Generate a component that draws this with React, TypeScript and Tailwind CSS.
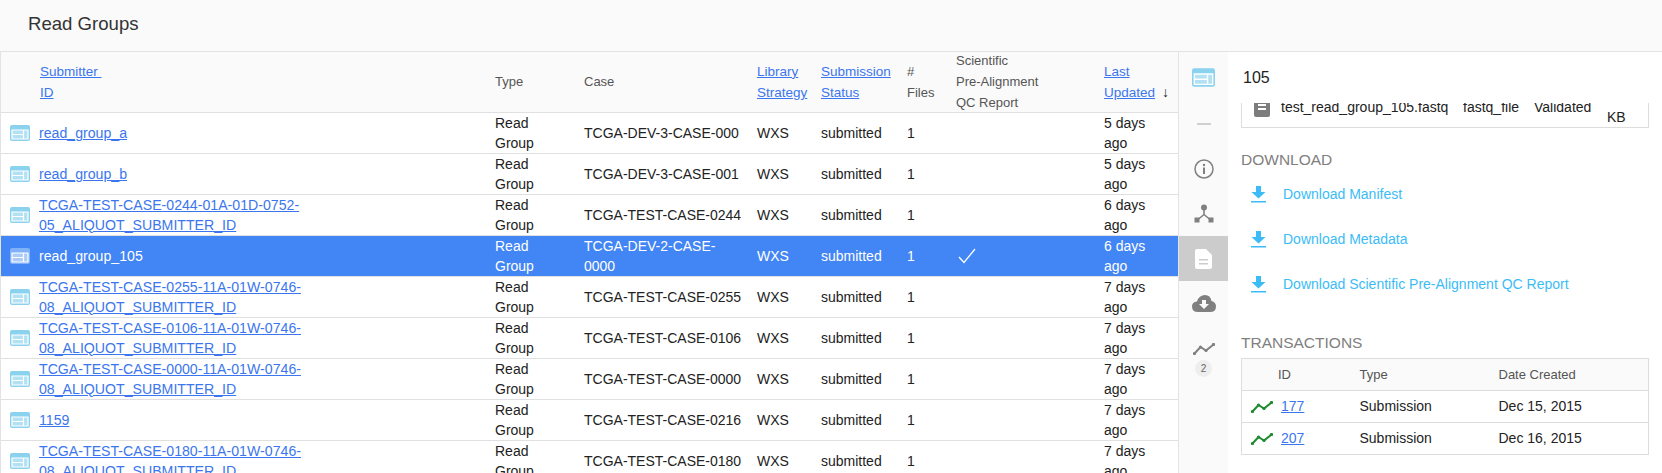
import { ReactNode } from "react";

const rows = [
  { id: "read_group_a", kase: "TCGA-DEV-3-CASE-000", age: "5 days ago" },
  { id: "read_group_b", kase: "TCGA-DEV-3-CASE-001", age: "5 days ago" },
  { id: "TCGA-TEST-CASE-0244-01A-01D-0752-05_ALIQUOT_SUBMITTER_ID", kase: "TCGA-TEST-CASE-0244", age: "6 days ago" },
  { id: "read_group_105", kase: "TCGA-DEV-2-CASE-0000", age: "6 days ago", selected: true },
  { id: "TCGA-TEST-CASE-0255-11A-01W-0746-08_ALIQUOT_SUBMITTER_ID", kase: "TCGA-TEST-CASE-0255", age: "7 days ago" },
  { id: "TCGA-TEST-CASE-0106-11A-01W-0746-08_ALIQUOT_SUBMITTER_ID", kase: "TCGA-TEST-CASE-0106", age: "7 days ago" },
  { id: "TCGA-TEST-CASE-0000-11A-01W-0746-08_ALIQUOT_SUBMITTER_ID", kase: "TCGA-TEST-CASE-0000", age: "7 days ago" },
  { id: "1159", kase: "TCGA-TEST-CASE-0216", age: "7 days ago" },
  { id: "TCGA-TEST-CASE-0180-11A-01W-0746-08_ALIQUOT_SUBMITTER_ID", kase: "TCGA-TEST-CASE-0180", age: "7 days ago" },
];

function ReadGroupIcon({ className, big }: { className?: string; big?: boolean }) {
  return (
    <svg viewBox="0 0 20 16" className={big ? "w-[23px] h-[19px] " + className : "w-[20px] h-[16px] " + className}>
      <rect x="0" y="0" width="20" height="16" rx="2" fill="currentColor" />
      <rect x="2" y="5" width="16" height="9" fill="#fff" fillOpacity="0.35" />
      <path d="M2 5H18V14H2Z M2 9.5H13.5 M13.5 5V14" fill="none" stroke="#fff" strokeWidth="1.2" />
    </svg>
  );
}

function DownloadIcon() {
  return (
    <svg viewBox="0 0 15 17" className="w-[15px] h-[17px] text-[#3bbcf7] shrink-0">
      <path d="M5 0H10V6H14.5L7.5 12.5L0.5 6H5Z M0 15H15V16.5H0Z" fill="currentColor" />
    </svg>
  );
}

function TrendIcon({ className }: { className?: string }) {
  return (
    <svg viewBox="0 0 22 12" className={"w-[22px] h-[12px] " + className}>
      <path d="M1.5 10.5L7.5 4L13 7.5L20.5 1.5" fill="none" stroke="currentColor" strokeWidth="2" />
      <circle cx="1.5" cy="10.5" r="1.6" fill="currentColor" />
      <circle cx="7.5" cy="4" r="1.6" fill="currentColor" />
      <circle cx="13" cy="7.5" r="1.6" fill="currentColor" />
      <circle cx="20.5" cy="1.5" r="1.6" fill="currentColor" />
    </svg>
  );
}

function HeadCell({ children, className }: { children: ReactNode; className?: string }) {
  return <th className={"pl-[5px] text-left align-middle font-normal text-[13px] leading-[21px] text-[#555] " + (className ?? "")}>{children}</th>;
}

function SortLink({ children }: { children: ReactNode }) {
  return <a className="text-[13.5px] text-[#3b76ee] underline">{children}</a>;
}

function RailItem({ children, active }: { children: ReactNode; active?: boolean }) {
  return (
    <div className={"h-[45px] flex items-center justify-center " + (active ? "bg-[#cccccc]" : "")}>
      {children}
    </div>
  );
}

export default function App() {
  return (
    <div className="h-[473px] w-[1662px] overflow-hidden flex flex-col bg-white text-[14px] text-[#222]" style={{ fontFamily: '"Liberation Sans", Arial, sans-serif' }}>
      <header className="h-[52px] shrink-0 flex items-center pl-[28px] pb-[3px] bg-[#fafafa] border-b border-[#e3e3e3]">
        <h1 className="text-[18.6px] text-[#333]">Read Groups</h1>
      </header>

      <div className="flex flex-1 min-h-0">
        <div className="w-[1178px] shrink-0 overflow-hidden border-l border-[#e3e3e3]">
          <table className="table-fixed w-[1177px] border-collapse">
            <colgroup>
              <col className="w-[489px]" />
              <col className="w-[89px]" />
              <col className="w-[173px]" />
              <col className="w-[64px]" />
              <col className="w-[86px]" />
              <col className="w-[49px]" />
              <col className="w-[148px]" />
              <col className="w-[79px]" />
            </colgroup>
            <thead>
              <tr className="h-[60px] bg-[#fafafa] border-b border-[#e0e0e0]">
                <HeadCell className="pl-[39px]">
                  <SortLink>Submitter&nbsp;<br />ID</SortLink>
                </HeadCell>
                <HeadCell>Type</HeadCell>
                <HeadCell>Case</HeadCell>
                <HeadCell><SortLink>Library<br />Strategy</SortLink></HeadCell>
                <HeadCell><SortLink>Submission<br />Status</SortLink></HeadCell>
                <HeadCell>#<br />Files</HeadCell>
                <HeadCell>
                  <div className="h-[59px] flex flex-col justify-center">
                    <span>Scientific</span>
                    <span>Pre-Alignment</span>
                    <span>QC Report</span>
                  </div>
                </HeadCell>
                <HeadCell>
                  <div className="flex items-end">
                    <SortLink>Last<br />Updated</SortLink>
                    <span className="ml-[7px] text-[14px] text-[#222]">↓</span>
                  </div>
                </HeadCell>
              </tr>
            </thead>
            <tbody className="leading-[20px]">
              {rows.map((row) => (
                <tr key={row.id} className={"h-[41px] border-b border-[#e0e0e0] " + (row.selected ? "bg-[#4285f4] text-white" : "")}>
                  <td className="pl-[9px]">
                    <div className="flex items-center">
                      <ReadGroupIcon className={row.selected ? "text-[#7fb0f8] shrink-0" : "text-[#8ad2ee] shrink-0"} />
                      <a className={"ml-[9px] w-[270px] text-[14.15px] " + (row.selected ? "" : "text-[#3b76ee] underline")}>{row.id}</a>
                    </div>
                  </td>
                  <td className="pl-[5px]"><div className="w-[50px]">Read Group</div></td>
                  <td className="pl-[5px]"><div className="w-[158px]">{row.kase}</div></td>
                  <td className="pl-[5px]">WXS</td>
                  <td className="pl-[5px]">submitted</td>
                  <td className="pl-[5px]">1</td>
                  <td className="pl-[5px]">
                    {row.selected && (
                      <svg viewBox="0 0 18 16" className="w-[18px] h-[16px] ml-[2px]">
                        <path d="M1 9L6 14.5L17 1" fill="none" stroke="#fff" strokeWidth="1.3" />
                      </svg>
                    )}
                  </td>
                  <td className="pl-[5px]"><div className="w-[55px]">{row.age}</div></td>
                </tr>
              ))}
            </tbody>
          </table>
        </div>

        <nav className="w-[50px] shrink-0 pt-[4px] bg-[#fafafa] border-l border-[#e3e3e3] text-[#808080]">
          <RailItem><ReadGroupIcon big className="text-[#8ad2ee] -mt-[3px]" /></RailItem>
          <RailItem><div className="w-[14px] h-[2px] bg-[#cfcfcf]" /></RailItem>
          <RailItem>
            <svg viewBox="0 0 20 20" className="w-[20px] h-[20px]">
              <circle cx="10" cy="10" r="9" fill="none" stroke="currentColor" strokeWidth="1.5" />
              <circle cx="10" cy="6" r="1.2" fill="currentColor" />
              <rect x="9" y="8.5" width="2" height="6.5" fill="currentColor" />
            </svg>
          </RailItem>
          <RailItem>
            <svg viewBox="0 0 20 20" className="w-[20px] h-[20px]">
              <circle cx="10" cy="3.5" r="3" fill="currentColor" />
              <path d="M10 5V10.5L4 15.5M10 10.5L16 15.5" fill="none" stroke="currentColor" strokeWidth="1.6" />
              <rect x="0.5" y="13.5" width="5" height="5" fill="currentColor" />
              <rect x="14.5" y="13.5" width="5" height="5" fill="currentColor" />
            </svg>
          </RailItem>
          <RailItem active>
            <svg viewBox="0 0 17 20" className="w-[17px] h-[20px]">
              <path fillRule="evenodd" d="M2 0H11L17 6V18Q17 20 15 20H2Q0 20 0 18V2Q0 0 2 0ZM4 10V11.5H13V10ZM4 14V15.5H13V14Z" fill="#fff" />
            </svg>
          </RailItem>
          <RailItem>
            <svg viewBox="0 0 24 17" className="w-[24px] h-[17px]">
              <path fillRule="evenodd" d="M6 17Q0 17 0 11.5Q0 7 5 6.5Q7 0 13 0Q18.5 0 19.5 6Q24 7 24 11.5Q24 17 18 17ZM10 5V9H7L12 14L17 9H14V5Z" fill="currentColor" />
            </svg>
          </RailItem>
          <div className="h-[45px] flex items-center justify-center pt-[1px]">
            <TrendIcon />
          </div>
          <div className="flex justify-center -mt-[11px]">
            <span className="w-[17px] h-[17px] rounded-full bg-[#eeeeee] text-[10px] leading-[17px] text-center text-[#666]">2</span>
          </div>
        </nav>

        <main className="flex-1 min-w-0 pl-[13px] pr-[13px]">
          <div className="h-[51px] flex items-center pl-[2px] text-[16px]">105</div>
          <div className="h-[25px] overflow-hidden border-x border-b border-[#dddddd] flex text-[14px] leading-[20px]">
            <svg viewBox="0 0 16 20" className="w-[16px] h-[20px] ml-[12px] -mt-[6px] shrink-0">
              <path fillRule="evenodd" d="M2 0H14Q16 0 16 2V18Q16 20 14 20H2Q0 20 0 18V2Q0 0 2 0ZM4 7V9H12V7ZM4 11V13H12V11Z" fill="#7d7d7d" />
            </svg>
            <span className="ml-[11px] -mt-[6px] w-[182px] shrink-0">test_read_group_105.fastq</span>
            <span className="-mt-[6px] w-[71px] shrink-0">fastq_file</span>
            <span className="-mt-[6px] w-[73px] shrink-0">Validated</span>
            <span className="mt-[4px]">KB</span>
          </div>

          <h2 className="mt-[24px] text-[15.5px] leading-[16px] text-[#808080]">DOWNLOAD</h2>
          <div className="mt-[4px] flex flex-col text-[#3bbcf7] text-[14px]">
            {["Download Manifest", "Download Metadata", "Download Scientific Pre-Alignment QC Report"].map((label) => (
              <a key={label} className="h-[45px] flex items-center pl-[10px] gap-[17px]">
                <DownloadIcon />
                {label}
              </a>
            ))}
          </div>

          <h2 className="mt-[28px] text-[15.5px] leading-[16px] text-[#808080]">TRANSACTIONS</h2>
          <table className="mt-[7px] w-full table-fixed border-collapse border border-[#dddddd] text-[14px]">
            <colgroup>
              <col className="w-[118px]" />
              <col className="w-[139px]" />
              <col />
            </colgroup>
            <thead>
              <tr className="h-[32px] bg-[#fafafa] border-b border-[#dddddd] text-[13px] text-[#555]">
                <th className="pl-[36px] text-left font-normal">ID</th>
                <th className="text-left font-normal">Type</th>
                <th className="text-left font-normal">Date Created</th>
              </tr>
            </thead>
            <tbody>
              {[
                { id: "177", date: "Dec 15, 2015" },
                { id: "207", date: "Dec 16, 2015" },
              ].map((tx) => (
                <tr key={tx.id} className="h-[32px] border-b border-[#dddddd]">
                  <td>
                    <div className="flex items-center pl-[9px] gap-[8px]">
                      <TrendIcon className="text-[#1f8a2e]" />
                      <a className="text-[#3b76ee] underline">{tx.id}</a>
                    </div>
                  </td>
                  <td>Submission</td>
                  <td>{tx.date}</td>
                </tr>
              ))}
            </tbody>
          </table>
        </main>
      </div>
    </div>
  );
}
